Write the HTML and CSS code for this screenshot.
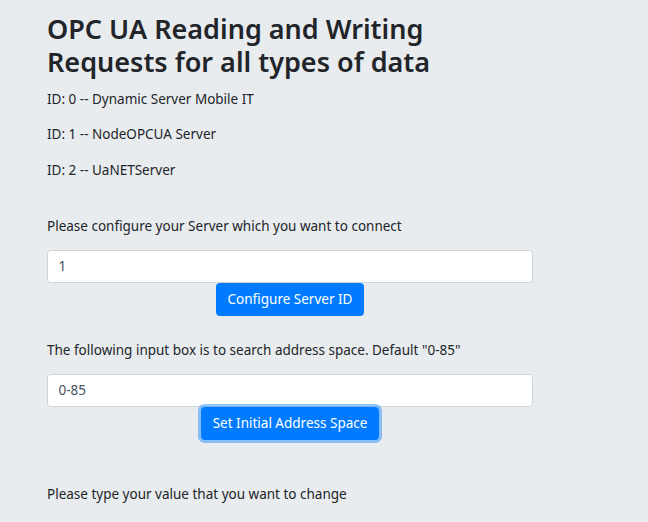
FILE: index.html
```html
<!DOCTYPE html>
<html lang="en">
<head>
<meta charset="utf-8">
<title>OPC UA Reading and Writing</title>
<link rel="stylesheet" href="styles.css">
</head>
<body>
<main class="page">
  <h1 class="title">OPC UA Reading and Writing<br>Requests for all types of data</h1>
  <p class="text">ID: 0 -- Dynamic Server Mobile IT</p>
  <p class="text">ID: 1 -- NodeOPCUA Server</p>
  <p class="text">ID: 2 -- UaNETServer</p>

  <section class="block block-first">
    <p class="text">Please configure your Server which you want to connect</p>
    <div class="field">
      <input class="input" type="text" value="1">
      <button class="btn" type="button">Configure Server ID</button>
    </div>
  </section>

  <section class="block">
    <p class="text">The following input box is to search address space. Default "0-85"</p>
    <div class="field">
      <input class="input" type="text" value="0-85">
      <button class="btn btn-focus" type="button">Set Initial Address Space</button>
    </div>
  </section>

  <section class="block block-last">
    <p class="text">Please type your value that you want to change</p>
  </section>
</main>
</body>
</html>
```

FILE: styles.css
```css
html, body {
  margin: 0;
  padding: 0;
  background: #e9ecef;
}

body {
  font-family: "Noto Sans", "Open Sans", sans-serif;
  font-size: 13.5px;
  line-height: 21.5px;
  color: #212529;
}

.page {
  padding: 13px 0 0 47px;
  width: 486px;
}

.title {
  margin: 0 0 9px 0;
  font-size: 27px;
  font-weight: 600;
  line-height: 32.5px;
}

.text {
  margin: 0 0 12.5px 0;
  padding-top: 1.5px;
}

.block-first {
  padding-top: 20.5px;
}

.field {
  display: flex;
  flex-direction: column;
  align-items: center;
}

.input {
  box-sizing: border-box;
  width: 486px;
  height: 33.5px;
  padding: 5px 10.5px;
  font: inherit;
  color: #495057;
  background: #fff;
  border: 1px solid #ced4da;
  border-radius: 3.5px;
  outline: none;
}

.btn {
  box-sizing: border-box;
  height: 33px;
  padding: 5px 10.5px;
  font: inherit;
  color: #fff;
  background: #007bff;
  border: 1px solid #007bff;
  border-radius: 3.5px;
  margin-bottom: 22px;
}

.btn-focus {
  box-shadow: 0 0 0 3px rgba(38, 143, 255, 0.5);
  margin-bottom: 42px;
}
```
